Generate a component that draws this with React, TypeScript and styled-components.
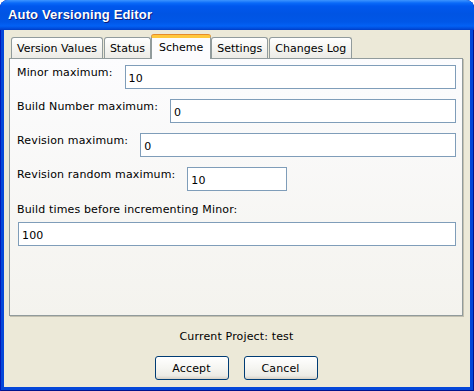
import styled, { createGlobalStyle } from "styled-components";

const GlobalStyle = createGlobalStyle`
    html, body {
        margin: 0;
        padding: 0;
        background: #ffffff;
    }
    body {
        font-family: "DejaVu Sans", Verdana, sans-serif;
        font-size: 11px;
        letter-spacing: 0.15px;
        color: #000;
    }
`;

const Window = styled.div`
    width: 474px;
    height: 391px;
    display: flex;
    flex-direction: column;
    background: #0447d9;
    border-radius: 8px 8px 0 0;
    box-shadow: inset 1px 0 0 #0019b8, inset -1px 0 0 #00138c, inset 0 -1px 0 #00138c;
    overflow: hidden;
`;

const TitleBar = styled.div`
    height: 30px;
    flex-shrink: 0;
    display: flex;
    align-items: center;
    padding: 0 8px 1px;
    box-sizing: border-box;
    background: linear-gradient(
        to bottom,
        #3d95ff 0px,
        #0a6af9 3px,
        #0058ee 6px,
        #0054e3 14px,
        #0057e8 22px,
        #0261f5 26px,
        #0048d6 29px,
        #003cc4 30px
    );
`;

const Title = styled.span`
    font-family: "Liberation Sans", Arial, sans-serif;
    font-weight: bold;
    font-size: 13px;
    color: #ffffff;
    text-shadow: 1px 1px 0 #0a1c7a;
`;

const Client = styled.div`
    flex: 1;
    margin: 0 4px 4px;
    background: #ece9d8;
    display: flex;
    flex-direction: column;
    padding: 5px 7px 0 5px;
    box-sizing: border-box;
`;

const TabStrip = styled.div`
    height: 23px;
    display: flex;
    align-items: flex-end;
    gap: 1px;
    padding-left: 2px;
`;

const Tab = styled.div<{ $active?: boolean }>`
    box-sizing: border-box;
    display: flex;
    align-items: center;
    justify-content: center;
    height: ${(p) => (p.$active ? "24px" : "21px")};
    padding: ${(p) => (p.$active ? "0 7px 2px" : "1px 5px 0")};
    margin: ${(p) => (p.$active ? "0 -1px -1px" : "0")};
    position: relative;
    z-index: ${(p) => (p.$active ? 2 : 0)};
    border: 1px solid #919b9c;
    border-bottom: none;
    border-top: ${(p) => (p.$active ? "3px solid #ffc83c" : "1px solid #919b9c")};
    border-radius: 3px 3px 0 0;
    background: ${(p) =>
        p.$active
            ? "#fcfcfe"
            : "linear-gradient(to bottom, #ffffff 0%, #f7f7f4 40%, #ecebe6 100%)"};
    box-shadow: ${(p) => (p.$active ? "0 -1px 0 #e68b2c" : "none")};
    letter-spacing: 0;
    white-space: nowrap;
`;

const Panel = styled.div`
    height: 258px;
    box-sizing: border-box;
    border: 1px solid #919b9c;
    box-shadow: 1px 1px 0 #c3c0b0;
    background: linear-gradient(to bottom, #fcfcfe 0%, #f4f3ee 100%);
    padding: 6px 6px 0 7px;
    display: flex;
    flex-direction: column;
    gap: 10px;
    position: relative;
    z-index: 1;
`;

const Row = styled.div`
    display: flex;
    align-items: flex-start;
    gap: 12px;
`;

const Label = styled.label`
    line-height: 16px;
    white-space: nowrap;
`;

const Stack = styled.div`
    display: flex;
    flex-direction: column;
    align-items: stretch;
    gap: 3px;
    padding-left: 1px;
`;

const StackLabel = styled.label`
    line-height: 18px;
    margin-left: -1px;
`;

const Field = styled.input<{ $width?: number }>`
    box-sizing: border-box;
    height: 24px;
    flex: ${(p) => (p.$width ? `0 0 ${p.$width}px` : "1 1 auto")};
    min-width: 0;
    border: 1px solid #7f9db9;
    background: #ffffff;
    padding: 2px 3px 0;
    font-family: "DejaVu Sans", Verdana, sans-serif;
    font-size: 11px;
    letter-spacing: 0.15px;
    color: #000;
    outline: none;
`;

const WideField = styled(Field)`
    flex: 0 0 24px;
    width: 100%;
`;

const ProjectLine = styled.div`
    height: 40px;
    display: flex;
    align-items: center;
    justify-content: center;
    padding-left: 1px;
`;

const ButtonRow = styled.div`
    display: flex;
    justify-content: center;
    gap: 15px;
`;

const Button = styled.button`
    width: 74px;
    height: 24px;
    box-sizing: border-box;
    border: 1px solid #003c74;
    border-radius: 3px;
    background: linear-gradient(to bottom, #ffffff 0%, #f5f5f1 50%, #ecebe6 85%, #d6d0c5 100%);
    font-family: "DejaVu Sans", Verdana, sans-serif;
    font-size: 11px;
    letter-spacing: 0.15px;
    color: #000;
    padding: 1px 0 0;
`;

export default function App() {
    return (
        <>
            <GlobalStyle />
            <Window>
                <TitleBar>
                    <Title>Auto Versioning Editor</Title>
                </TitleBar>
                <Client>
                    <TabStrip>
                        <Tab>Version Values</Tab>
                        <Tab>Status</Tab>
                        <Tab $active>Scheme</Tab>
                        <Tab>Settings</Tab>
                        <Tab>Changes Log</Tab>
                    </TabStrip>
                    <Panel>
                        <Row>
                            <Label>Minor maximum:</Label>
                            <Field defaultValue="10" />
                        </Row>
                        <Row>
                            <Label>Build Number maximum:</Label>
                            <Field defaultValue="0" />
                        </Row>
                        <Row>
                            <Label>Revision maximum:</Label>
                            <Field defaultValue="0" />
                        </Row>
                        <Row>
                            <Label>Revision random maximum:</Label>
                            <Field $width={100} defaultValue="10" />
                        </Row>
                        <Stack>
                            <StackLabel>Build times before incrementing Minor:</StackLabel>
                            <WideField defaultValue="100" />
                        </Stack>
                    </Panel>
                    <ProjectLine>Current Project: test</ProjectLine>
                    <ButtonRow>
                        <Button>Accept</Button>
                        <Button>Cancel</Button>
                    </ButtonRow>
                </Client>
            </Window>
        </>
    );
}
